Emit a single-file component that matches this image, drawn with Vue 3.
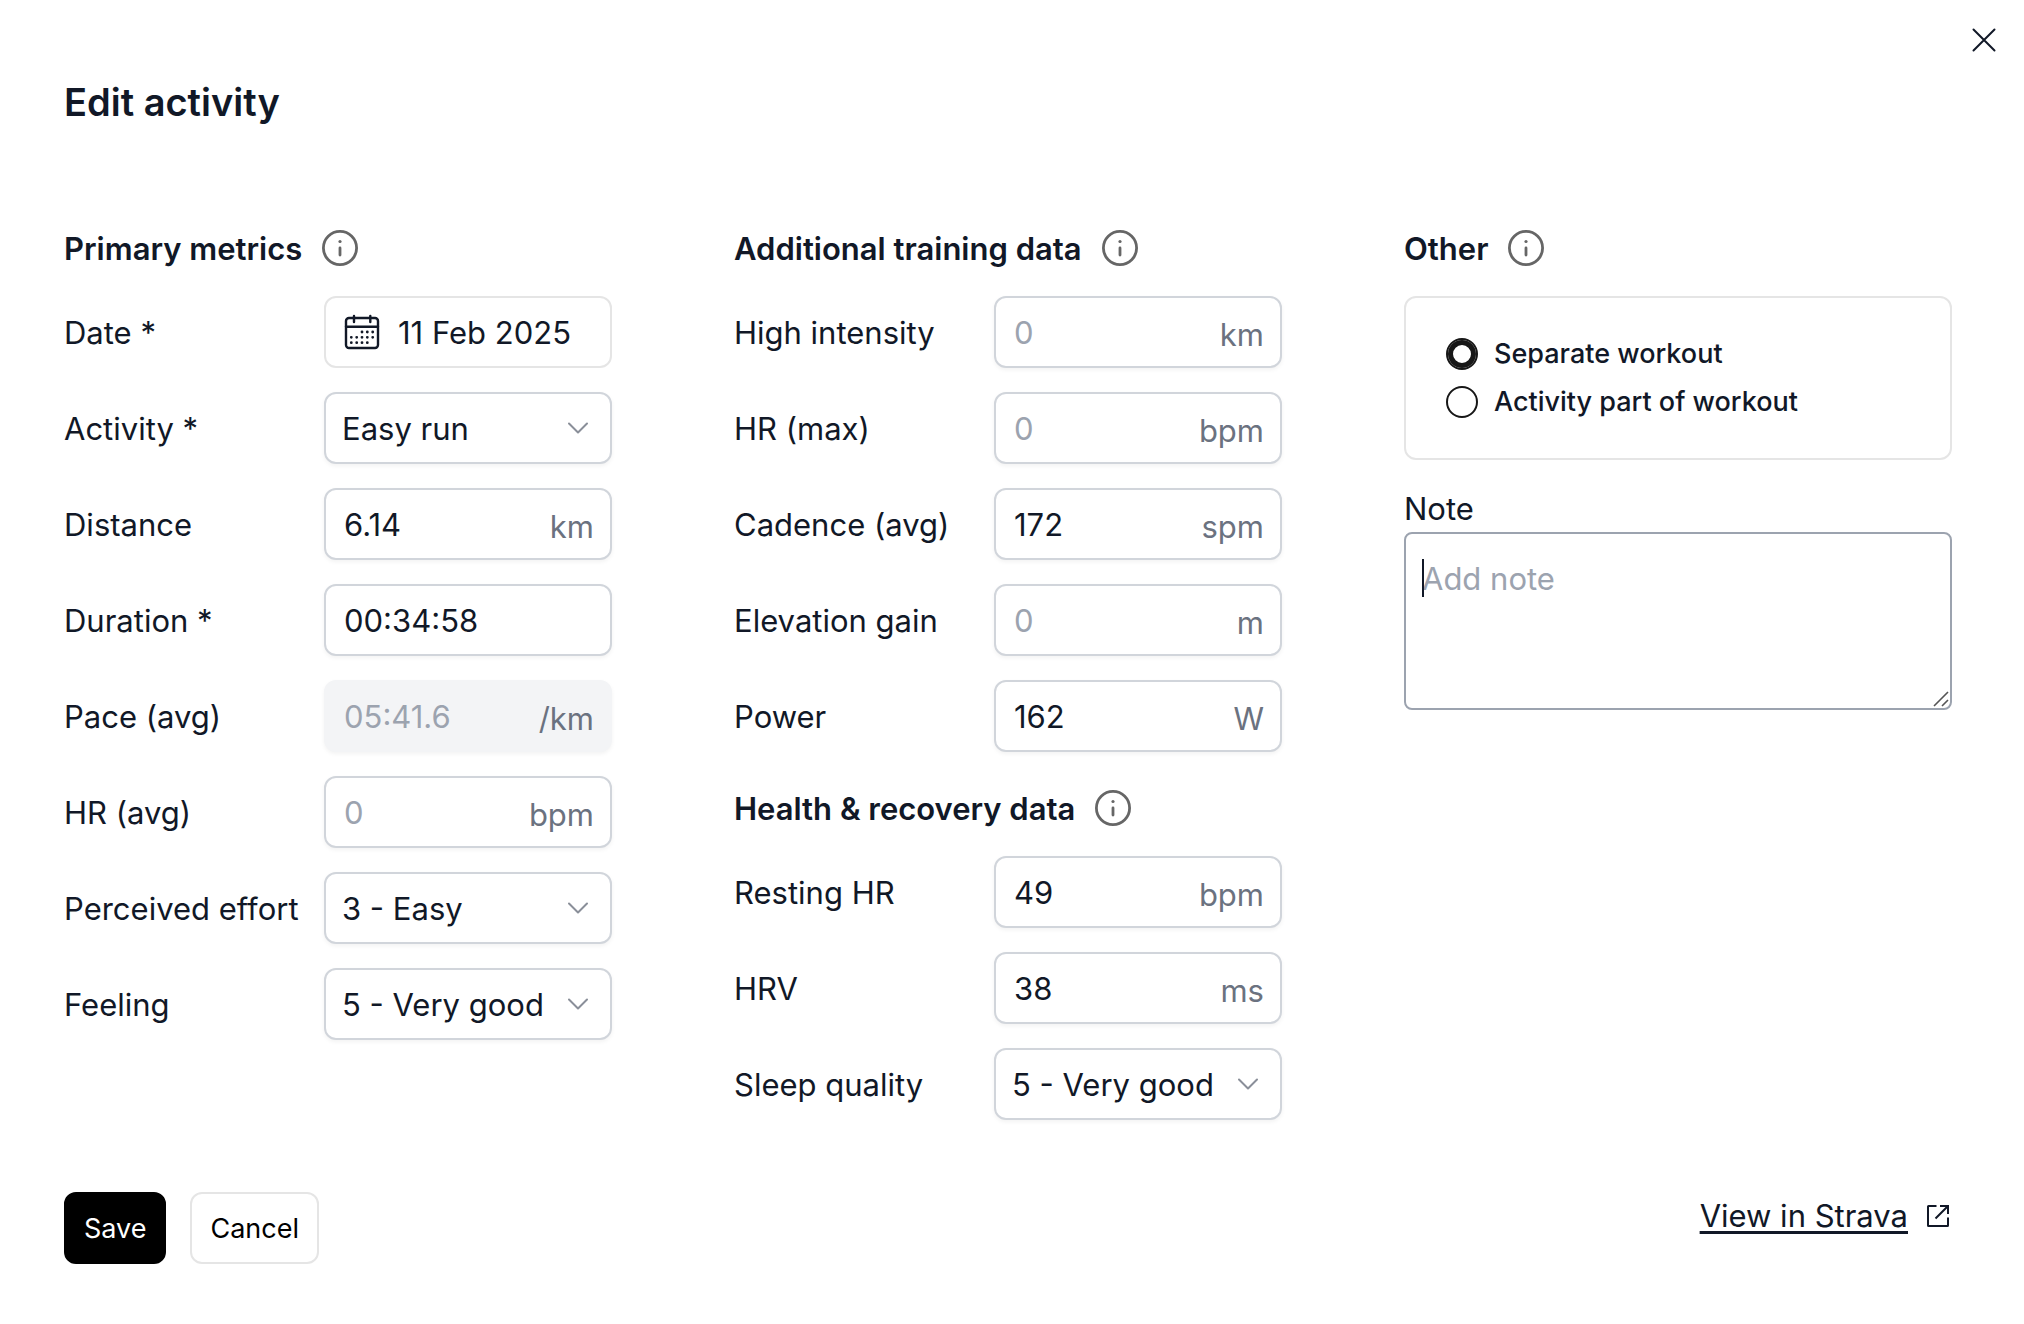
<template>
    <form class="dialog" @submit.prevent>
        <button type="button" class="close" aria-label="Close">
            <svg width="24" height="24" viewBox="0 0 24 24" fill="none" stroke="currentColor" stroke-width="2" stroke-linecap="round">
                <path d="M1.5 1.5l21 21M22.5 1.5l-21 21" />
            </svg>
        </button>

        <h1>Edit activity</h1>

        <div class="columns">
            <div v-for="(sections, c) in columns" :key="c" class="column">
                <section v-for="section in sections" :key="section.title" class="section">
                    <h2>
                        <span>{{ section.title }}</span>
                        <button type="button" class="info" :aria-label="'About ' + section.title">
                            <svg width="36" height="36" viewBox="0 0 36 36" fill="none">
                                <circle cx="18" cy="18" r="16.6" stroke="currentColor" stroke-width="2.8" />
                                <circle cx="18" cy="11.5" r="1.6" fill="currentColor" />
                                <path d="M18 18v7" stroke="currentColor" stroke-width="2.8" stroke-linecap="round" />
                            </svg>
                        </button>
                    </h2>

                    <div v-for="field in section.fields" :key="field.id" class="row">
                        <label :for="field.id">{{ field.label }}</label>

                        <button v-if="field.type === 'date'" :id="field.id" type="button" class="control date">
                            <svg width="36" height="36" viewBox="0 0 36 36" fill="none" stroke="currentColor" stroke-width="2.4" stroke-linecap="round">
                                <rect x="2" y="4" width="32" height="30" rx="3" />
                                <path d="M2 12.7h32M10 2v6M26.3 2v6" />
                                <path d="M18 18h.01M23.3 18h.01M28.7 18h.01M7.3 23.3h.01M12.7 23.3h.01M18 23.3h.01M23.3 23.3h.01M28.7 23.3h.01M7.3 28.7h.01M12.7 28.7h.01M18 28.7h.01M23.3 28.7h.01" stroke-width="2.8" />
                            </svg>
                            <span>{{ field.value }}</span>
                        </button>

                        <div v-else-if="field.type === 'select'" class="control select">
                            <select :id="field.id" v-model="field.value">
                                <option v-for="option in field.options" :key="option">{{ option }}</option>
                            </select>
                            <svg width="20" height="12" viewBox="0 0 20 12" fill="none" stroke="currentColor" stroke-width="2" stroke-linecap="round" stroke-linejoin="round">
                                <path d="M1 1.5l9 9 9-9" />
                            </svg>
                        </div>

                        <div v-else class="control" :class="{ disabled: field.disabled }">
                            <input :id="field.id" v-model="field.value" type="text" placeholder="0" :disabled="field.disabled" />
                            <span v-if="field.unit" class="unit">{{ field.unit }}</span>
                        </div>
                    </div>
                </section>

                <!-- Workout link and note sit under "Other" -->
                <template v-if="c === 2">
                    <fieldset class="workout">
                        <label><input v-model="workout" type="radio" name="workout" value="separate" />Separate workout</label>
                        <label><input v-model="workout" type="radio" name="workout" value="part" />Activity part of workout</label>
                    </fieldset>
                    <div class="note">
                        <label for="note">Note</label>
                        <div class="note-box">
                            <textarea id="note" v-model="note" placeholder="Add note"></textarea>
                            <span v-if="!note" class="caret"></span>
                            <svg class="grip" width="16" height="16" viewBox="0 0 16 16" fill="none" stroke="currentColor" stroke-width="1.6">
                                <path d="M1 15L15 1M9 15l6-6" />
                            </svg>
                        </div>
                    </div>
                </template>
            </div>
        </div>

        <footer>
            <button type="submit" class="btn save">Save</button>
            <button type="button" class="btn cancel">Cancel</button>
            <a href="#" class="strava">
                <span>View in Strava</span>
                <svg width="28" height="28" viewBox="0 0 28 28" fill="none" stroke="currentColor" stroke-width="2">
                    <path d="M12.5 4h-8a.5.5 0 0 0-.5.5v19a.5.5 0 0 0 .5.5h19a.5.5 0 0 0 .5-.5v-8M16 4h8v8M24 4L11.5 16.5" />
                </svg>
            </a>
        </footer>
    </form>
</template>

<script setup>
import { ref, reactive } from 'vue'

const columns = reactive([
    [
        {
            title: 'Primary metrics',
            fields: [
                { id: 'date', label: 'Date *', type: 'date', value: '11 Feb 2025' },
                { id: 'activity', label: 'Activity *', type: 'select', value: 'Easy run', options: ['Easy run'] },
                { id: 'distance', label: 'Distance', value: '6.14', unit: 'km' },
                { id: 'duration', label: 'Duration *', value: '00:34:58' },
                { id: 'pace', label: 'Pace (avg)', value: '05:41.6', unit: '/km', disabled: true },
                { id: 'hr-avg', label: 'HR (avg)', value: '', unit: 'bpm' },
                { id: 'effort', label: 'Perceived effort', type: 'select', value: '3 - Easy', options: ['3 - Easy'] },
                { id: 'feeling', label: 'Feeling', type: 'select', value: '5 - Very good', options: ['5 - Very good'] },
            ],
        },
    ],
    [
        {
            title: 'Additional training data',
            fields: [
                { id: 'intensity', label: 'High intensity', value: '', unit: 'km' },
                { id: 'hr-max', label: 'HR (max)', value: '', unit: 'bpm' },
                { id: 'cadence', label: 'Cadence (avg)', value: '172', unit: 'spm' },
                { id: 'elevation', label: 'Elevation gain', value: '', unit: 'm' },
                { id: 'power', label: 'Power', value: '162', unit: 'W' },
            ],
        },
        {
            title: 'Health & recovery data',
            fields: [
                { id: 'resting-hr', label: 'Resting HR', value: '49', unit: 'bpm' },
                { id: 'hrv', label: 'HRV', value: '38', unit: 'ms' },
                { id: 'sleep', label: 'Sleep quality', type: 'select', value: '5 - Very good', options: ['5 - Very good'] },
            ],
        },
    ],
    [{ title: 'Other', fields: [] }],
])
const workout = ref('separate')
const note = ref('')
</script>

<style>
body {
    background: #fff;
}
</style>

<style scoped>
.dialog {
    position: relative;
    box-sizing: border-box;
    padding: 72px 72px 60px 64px;
    font-family: Inter, "Liberation Sans", sans-serif;
    font-size: 31px;
    line-height: 48px;
    color: #111827;
}

.dialog *,
.dialog *::before {
    box-sizing: border-box;
}

button,
input,
select,
textarea {
    font: inherit;
    color: inherit;
    margin: 0;
}

.close,
.info {
    display: flex;
    padding: 0;
    border: 0;
    background: none;
}

.close {
    position: absolute;
    top: 28px;
    right: 28px;
}

.info {
    color: #666;
}

h1 {
    margin: 0;
    padding-top: 2px;
    font-size: 38px;
    line-height: 56px;
    font-weight: 600;
}

.columns {
    display: grid;
    grid-template-columns: repeat(3, 1fr);
    gap: 122px;
    margin-top: 94px;
}

.column {
    display: flex;
    flex-direction: column;
    gap: 32px;
}

.section {
    display: flex;
    flex-direction: column;
    gap: 24px;
}

h2 {
    display: flex;
    align-items: center;
    gap: 20px;
    height: 48px;
    margin: 0;
    font-size: 31px;
    line-height: 48px;
    font-weight: 600;
}

h2 span,
.row label,
.date span,
.control input,
.select select {
    padding-top: 2px;
}

.row {
    display: grid;
    grid-template-columns: 260px 1fr;
    align-items: center;
}

.control {
    display: flex;
    align-items: center;
    width: 100%;
    height: 72px;
    padding: 0 16px 0 18px;
    border: 2px solid #d1d5db;
    border-radius: 12px;
    background: #fff;
    box-shadow: 0 2px 4px rgba(0, 0, 0, 0.05);
}

.date {
    gap: 18px;
    border-color: #e5e5e5;
    box-shadow: none;
}

.control input {
    flex: 1;
    width: 100%;
    min-width: 0;
    padding: 2px 0 0;
    border: 0;
    outline: 0;
    background: none;
}

.disabled {
    border-color: #f3f4f6;
    background: #f3f4f6;
}

.disabled input,
input::placeholder,
textarea::placeholder {
    color: #9ca3af;
    opacity: 1;
}

.unit {
    padding-top: 6px;
    color: #6b7280;
}

.select {
    position: relative;
    padding: 0;
}

.select select {
    appearance: none;
    width: 100%;
    height: 100%;
    padding: 2px 56px 0 16px;
    border: 0;
    border-radius: 12px;
    background: none;
}

.select svg {
    position: absolute;
    right: 22px;
    color: #8a8f99;
    pointer-events: none;
}

.workout {
    display: flex;
    flex-direction: column;
    gap: 16px;
    min-width: 0;
    margin: -8px 0 0;
    padding: 40px;
    border: 2px solid #e5e5e5;
    border-radius: 12px;
}

.workout label {
    display: flex;
    align-items: center;
    gap: 16px;
    font-size: 27px;
    line-height: 32px;
    font-weight: 500;
}

.workout input {
    appearance: none;
    width: 32px;
    height: 32px;
    border: 2px solid #171717;
    border-radius: 50%;
}

.workout input:checked {
    box-shadow: inset 0 0 0 5px #171717;
}

.note {
    display: flex;
    flex-direction: column;
    margin-top: -7px;
}

.note-box {
    position: relative;
    display: flex;
    margin-top: -1px;
}

textarea {
    width: 100%;
    height: 178px;
    padding: 21px 16px;
    border: 2px solid #9ca3af;
    border-radius: 8px;
    outline: 0;
    background: #fff;
    resize: vertical;
}

textarea::-webkit-resizer {
    background: none;
}

.grip {
    position: absolute;
    right: 3px;
    bottom: 3px;
    color: #555;
    pointer-events: none;
}

.caret {
    position: absolute;
    top: 27px;
    left: 18px;
    width: 2px;
    height: 38px;
    background: #111827;
}

footer {
    display: flex;
    align-items: flex-start;
    gap: 24px;
    margin-top: 72px;
}

.btn {
    height: 72px;
    padding: 2px 18px 0;
    border: 2px solid #e5e5e5;
    border-radius: 12px;
    background: #fff;
    color: #000;
    font-size: 27px;
}

.save {
    border-color: #000;
    background: #000;
    color: #fff;
}

.strava {
    display: flex;
    align-items: center;
    gap: 16px;
    margin-left: auto;
    color: inherit;
    text-decoration: none;
}

.strava span {
    text-decoration: underline;
    text-decoration-thickness: 3px;
    text-underline-offset: 4px;
}
</style>
